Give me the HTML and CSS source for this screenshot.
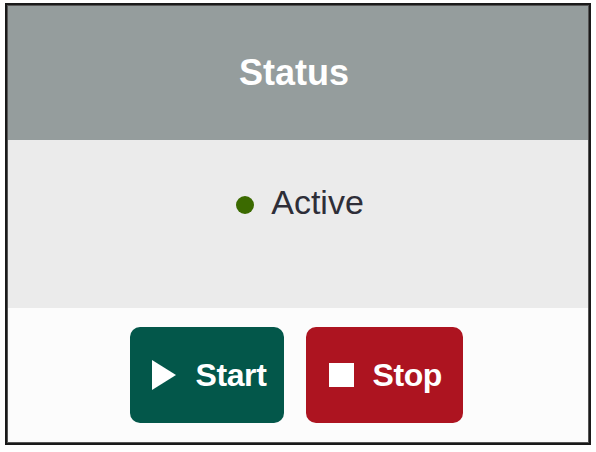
FILE: index.html
```html
<!DOCTYPE html>
<html>
<head>
<meta charset="utf-8">
<link rel="stylesheet" href="styles.css">
</head>
<body>
<div class="panel">
  <div class="panel-header">Status</div>
  <div class="panel-body">
    <span class="dot"></span>
    <span class="state">Active</span>
  </div>
  <div class="panel-footer">
    <button class="btn btn-start">
      <svg class="icon-play" width="24" height="30" viewBox="0 0 24 30"><polygon points="0,0 24,15 0,30" fill="#fff"/></svg>
      <span>Start</span>
    </button>
    <button class="btn btn-stop">
      <span class="icon-stop"></span>
      <span>Stop</span>
    </button>
  </div>
</div>
</body>
</html>
```

FILE: styles.css
```css
* { box-sizing: border-box; }
html, body { margin: 0; padding: 0; background: #ffffff; }
body {
  font-family: "Liberation Sans", Arial, Helvetica, sans-serif;
  padding: 3px 5px;
}
.panel {
  width: 586px;
  height: 442px;
  border: 2px solid #1a1a1a;
  outline: 1px solid #555;
  outline-offset: -3px;
  display: flex;
  flex-direction: column;
}
.panel-header {
  height: 135px;
  background: #959d9d;
  color: #ffffff;
  font-weight: bold;
  font-size: 36px;
  display: flex;
  align-items: center;
  justify-content: center;
  padding-right: 8px;
}
.panel-body {
  height: 168px;
  background: #ebebeb;
  display: flex;
  justify-content: center;
  align-items: flex-start;
  padding-top: 42px;
  padding-left: 4px;
  gap: 17px;
}
.dot {
  width: 18px;
  height: 18px;
  border-radius: 50%;
  background: #3b6a00;
  margin-top: 14px;
}
.state {
  font-size: 34px;
  line-height: 40px;
  color: #2e2e38;
}
.panel-footer {
  flex: 1;
  background: #fcfcfc;
  display: flex;
  justify-content: center;
  align-items: flex-start;
  padding-top: 19px;
  padding-right: 4px;
  gap: 22px;
}
.btn {
  height: 96px;
  border: none;
  border-radius: 10px;
  color: #ffffff;
  font-family: inherit;
  font-weight: bold;
  font-size: 32px;
  display: flex;
  align-items: center;
  padding: 0 12px 0 22px;
  gap: 20px;
  letter-spacing: -0.4px;
}
.btn-start { background: #03574a; width: 154px; }
.btn-stop { background: #ad1420; width: 157px; padding-left: 23px; gap: 19px; }
.icon-stop {
  width: 25px;
  height: 24px;
  background: #ffffff;
  display: block;
}
.icon-play { display: block; }
```
